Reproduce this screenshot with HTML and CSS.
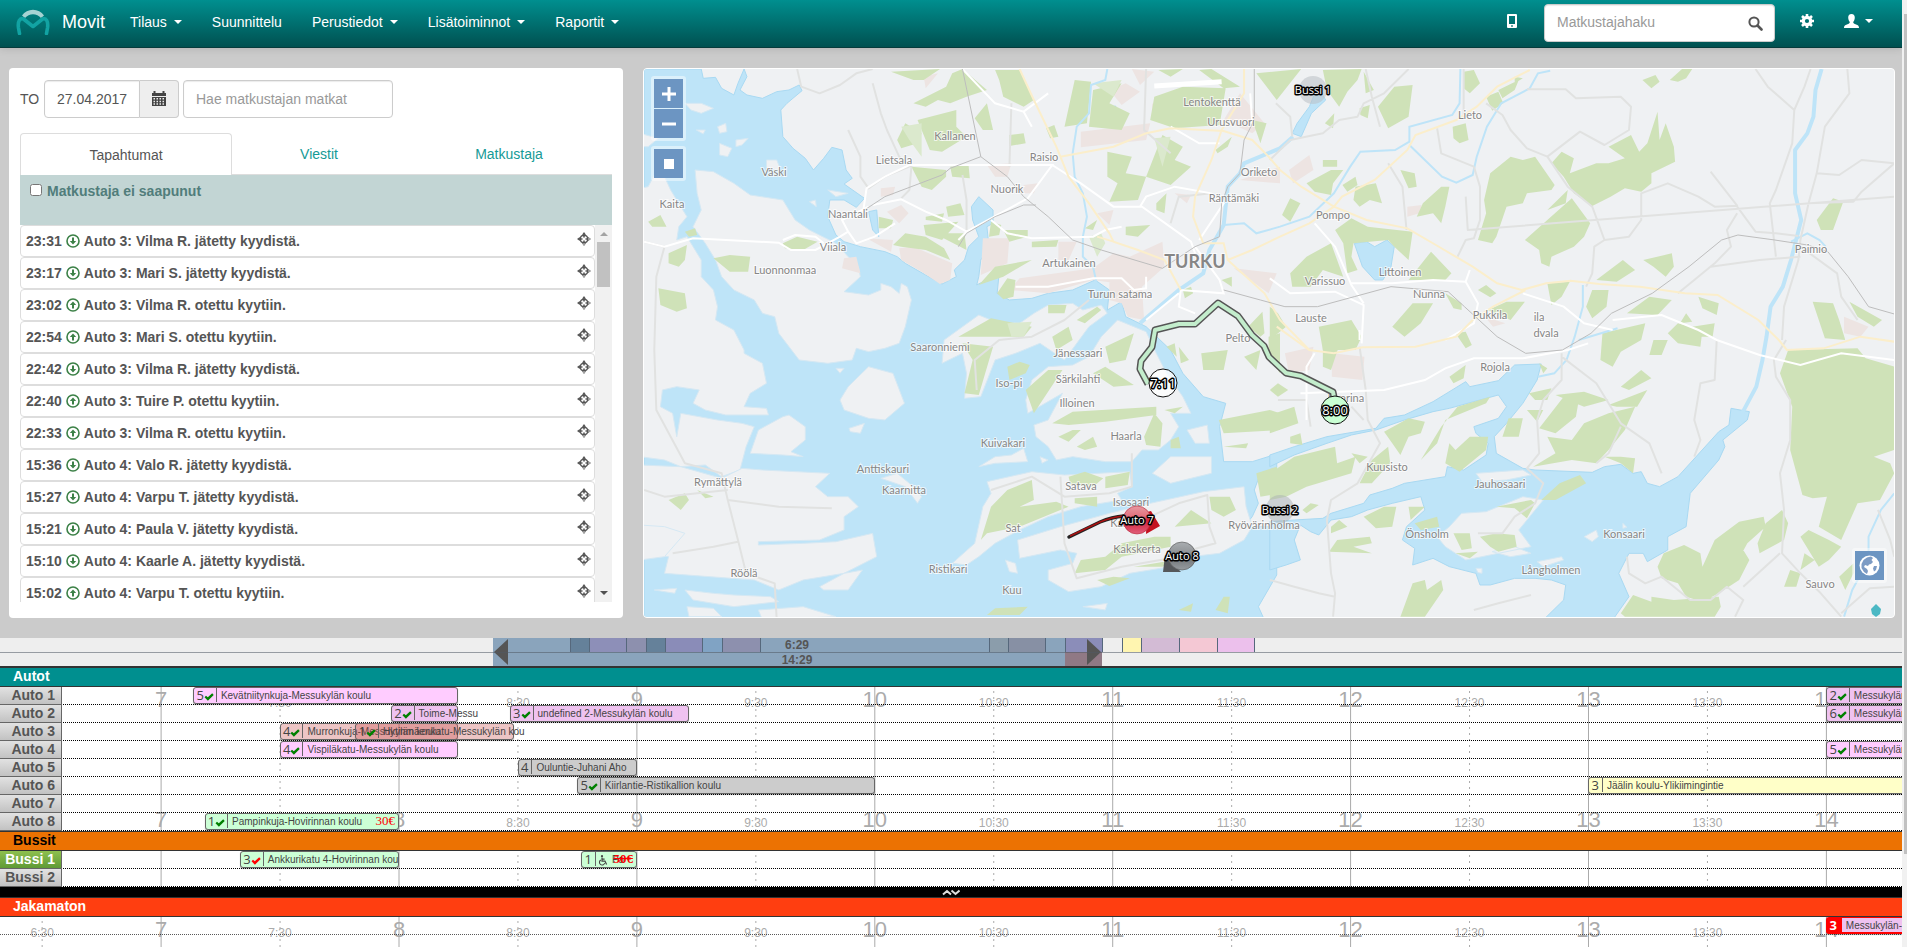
FILE: index.html
```
<!DOCTYPE html>
<html lang="fi">
<head>
<meta charset="utf-8">
<title>Movit</title>
<link rel="stylesheet" href="styles.css">
</head>
<body>
<svg class="defs" width="0" height="0" aria-hidden="true">
  <symbol id="i-target" viewBox="0 0 14 14"><circle cx="7" cy="7" r="3.800" fill="none" stroke="#555" stroke-width="1.500"/><path d="M6.200 1.500h1.600v4H6.200zM6.200 8.500h1.600v4H6.200zM1.500 6.200h4v1.600h-4zM8.500 6.200h4v1.600h-4zM7 0l2 2.800H5zM7 14l2-2.800H5zM0 7l2.800-2v4zM14 7l-2.800-2v4z" fill="#555"/></symbol>
  <symbol id="i-down" viewBox="0 0 14 14"><circle cx="7" cy="7" r="6" fill="none" stroke="#3c8147" stroke-width="1.600"/><path d="M6 3.500h2v3.500h2.200L7 10.600 3.800 7H6z" fill="#3c8147"/></symbol>
  <symbol id="i-up" viewBox="0 0 14 14"><circle cx="7" cy="7" r="6" fill="none" stroke="#3c8147" stroke-width="1.600"/><path d="M6 10.500h2V7h2.200L7 3.400 3.800 7H6z" fill="#3c8147"/></symbol>
  <symbol id="i-check" viewBox="0 0 10 8"><path d="M0.500 4.200L2 2.800l1.800 1.500L8.200.2 9.700 1.900 3.900 7.800z" fill="currentColor"/></symbol>
  <symbol id="i-wheel" viewBox="0 0 10 11"><circle cx="4" cy="1.200" r="1.100" fill="#444"/><path d="M4 2.500v3.700h3l1.600 3.300M4 4.200h2.600" fill="none" stroke="#444" stroke-width="1.200"/><path d="M2.800 5a2.700 2.700 0 1 0 3.900 3.200" fill="none" stroke="#444" stroke-width="1.100"/></symbol>
</svg>
<div class="page">
<div class="app">
  <header class="navbar">
    <a class="brand" href="#">
      <svg class="logo" width="34" height="26" viewBox="0 0 34 26" aria-hidden="true">
        <path d="M6 6.500A13.500 13.500 0 0 1 28 6.500L25 9A10.500 10.500 0 0 0 9 9z" fill="#a6d3d3"/>
        <path d="M3.500 24.500L2.500 19C1.500 12 4 8.500 7.500 10L17 17.500 26.500 10c3.500-1.500 6 2 5 9l-1 5.500" fill="none" stroke="#12a3a3" stroke-width="3.600" stroke-linecap="round" stroke-linejoin="round"/>
      </svg>
      <span>Movit</span>
    </a>
    <nav class="menu">
      <a href="#">Tilaus<i class="caret"></i></a>
      <a href="#">Suunnittelu</a>
      <a href="#">Perustiedot<i class="caret"></i></a>
      <a href="#">Lisätoiminnot<i class="caret"></i></a>
      <a href="#">Raportit<i class="caret"></i></a>
    </nav>
    <div class="tools">
      <a href="#" aria-label="Mobiili"><svg width="12" height="14" viewBox="0 0 12 14"><path fill="#fff" fill-rule="evenodd" d="M2 0h8a1 1 0 0 1 1 1v12a1 1 0 0 1-1 1H2a1 1 0 0 1-1-1V1a1 1 0 0 1 1-1zM3 2v8h6V2zM5.200 11.200v1.600h1.600v-1.600z"/></svg></a>
      <div class="search">
        <input type="text" placeholder="Matkustajahaku" aria-label="Matkustajahaku">
        <svg width="15" height="15" viewBox="0 0 15 15" aria-hidden="true"><circle cx="6" cy="6" r="4.600" fill="none" stroke="#555" stroke-width="2"/><path d="M9.500 9.500l4 4" stroke="#555" stroke-width="2.600" stroke-linecap="round"/></svg>
      </div>
      <a href="#" aria-label="Asetukset"><svg width="14" height="14" viewBox="0 0 14 14"><circle cx="7" cy="7" r="3.700" fill="none" stroke="#fff" stroke-width="3.200"/><path d="M7 0v3M7 11v3M0 7h3M11 7h3M2 2l2.200 2.200M9.800 9.800L12 12M12 2L9.800 4.200M4.200 9.800L2 12" stroke="#fff" stroke-width="2.600"/></svg></a>
      <a href="#" aria-label="Käyttäjä"><svg width="15" height="14" viewBox="0 0 15 14"><path fill="#fff" d="M7.500 0C9.700 0 10.900 1.500 10.800 3.700 10.700 5.700 10 7 9.300 7.800c-.2 1 .2 1.500 1 1.900l3 1.300C14.600 11.600 15 12.500 15 14H0c0-1.500.4-2.400 1.700-3l3-1.300c.8-.4 1.200-.9 1-1.900C5 7 4.300 5.700 4.200 3.700 4.100 1.500 5.300 0 7.500 0z"/></svg><i class="caret"></i></a>
    </div>
  </header>

  <main class="main">
    <section class="panel">
      <form class="filters">
        <label for="date">TO</label>
        <div class="date">
          <input id="date" type="text" value="27.04.2017">
          <button type="button" aria-label="Kalenteri"><svg width="14" height="15" viewBox="0 0 14 15"><path fill="#444" fill-rule="evenodd" d="M0 2h1.500V0h2v2h7V0h2v2H14v3H0zM0 6h14v9H0zM1.500 7v1.500H3V7zm3 0v1.500H6V7zm3 0v1.500H9V7zm3 0v1.500H12V7zM1.500 9.700v1.500H3V9.700zm3 0v1.500H6V9.700zm3 0v1.500H9V9.700zm3 0v1.500H12V9.700zM1.500 12.300v1.500H3v-1.500zm3 0v1.500H6v-1.500zm3 0v1.500H9v-1.500zm3 0v1.500H12v-1.500z"/></svg></button>
        </div>
        <input class="trip" type="text" placeholder="Hae matkustajan matkat" aria-label="Hae matkustajan matkat">
      </form>
      <nav class="tabs">
        <a class="active" href="#">Tapahtumat</a>
        <a href="#">Viestit</a>
        <a href="#">Matkustaja</a>
      </nav>
      <div class="band"><input type="checkbox" id="absent"><label for="absent">Matkustaja ei saapunut</label></div>
      <div class="feed">
        <ul id="feed"></ul>
        <div class="bar"><i class="up"></i><i class="thumb"></i><i class="dn"></i></div>
      </div>
    </section>

    <section class="map">
      <svg class="chart" viewBox="643 69 1252 548" preserveAspectRatio="xMidYMid slice" aria-label="Kartta">
        <defs>
          <linearGradient id="gRed" x1="0" y1="0" x2="0" y2="1"><stop offset="0" stop-color="#e89aa2"/><stop offset=".35" stop-color="#e3737f"/><stop offset=".5" stop-color="#cf1f38"/><stop offset="1" stop-color="#e0607c"/></linearGradient>
          <linearGradient id="gGray" x1="0" y1="0" x2="0" y2="1"><stop offset="0" stop-color="#a9adb0"/><stop offset=".4" stop-color="#8f9396"/><stop offset=".5" stop-color="#6c7073"/><stop offset="1" stop-color="#969b9f"/></linearGradient>
        </defs>
        <rect x="640" y="60" width="1270" height="570" fill="#eff1f3"/>
        <g transform="translate(640 60) scale(.40816 .33333)">
          <g class="water">
            <path d="M10 27L150 27 155 55 185 52 200 85 230 105 240 70 255 27 262 50 245 90 262 105 300 115 335 95 365 90 390 75 397 92 360 130 345 150 350 230 375 265 405 295 425 330 450 295 470 262 495 270 505 330 520 355 500 372 550 415 530 442 500 420 465 420 460 470 480 525 500 545 540 560 600 575 630 590 650 610 700 645 740 672 775 650 770 630 795 600 805 560 830 530 815 480 812 440 830 410 865 450 865 490 850 500 855 560 835 600 830 650 825 675 880 640 875 700 905 720 960 715 1000 700 1060 690 1115 660 1150 690 1145 750 1180 725 1190 770 1215 785 1240 800 1300 870 1330 940 1380 1010 1435 1030 1420 1100 1430 1205 1500 1205 1560 1182 1560 1225 1520 1240 1505 1290 1515 1330 1500 1370 1480 1400 1560 1400 1560 1545 1515 1640 1530 1680 10 1680z"/>
            <path transform="translate(1543 840)" d="M0 380L0 345 60 320 140 290 260 265 280 235 330 225 400 185 480 125 490 140 560 122 600 75 665 72 655 120 620 190 580 250 550 290 555 340 620 385 650 390 790 397 820 380 860 373 890 400 910 395 925 430 955 440 1000 410 1100 275 1125 255 1130 205 1175 215 1170 240 1110 300 1115 320 1100 360 1030 460 1020 560 975 590 975 630 925 665 915 640 880 640 855 700 880 770 840 840 670 840 720 780 725 735 690 720 650 715 600 715 540 735 515 735 505 700 440 680 400 655 350 675 355 625 325 600 335 560 380 510 370 470 300 490 240 510 200 530 150 540 120 585 100 575 75 555 60 600 75 660 40 675 0 690 0 545 60 540 130 535 150 520 230 490 245 465 300 445 330 430 430 410 435 380 475 390 530 345 535 310 505 280 500 260 560 235 580 200 560 165 500 185 440 205 400 215 330 240 260 270 200 285 140 310 60 345z"/>
            <path d="M10 555L40 565 48 620 40 660 20 630zM40 760L60 790 65 810 45 820 38 790zM1120 150L1165 138 1175 180 1150 200 1120 190zM560 455L580 450 585 530 570 510zM1750 550L1780 545 1800 560 1830 540 1848 560 1840 620 1820 660 1800 660 1770 620zM1610 190L1640 140 1660 80 1680 120 1645 160 1620 230 1598 220zM2915 940L2945 935 2955 970 2920 980z"/>
          </g>
          <g class="land">
            <path d="M135 330L180 335 230 370 270 405 350 420 360 440 380 480 415 510 480 550 510 590 535 620 540 650 500 695 560 705 590 690 590 670 615 680 635 700 640 670 655 680 665 720 650 800 635 850 600 865 560 875 530 865 520 900 460 910 390 900 340 820 330 770 300 760 280 720 230 690 200 650 185 600 160 550 130 500 150 450 140 400z"/>
            <path d="M0 385L20 380 35 345 60 350 75 390 100 440 115 470 95 500 90 540 115 530 130 560 150 600 150 650 180 690 190 740 185 780 230 810 255 870 255 880 300 910 310 970 270 1000 255 1040 310 1045 315 1065 210 1065 160 1050 130 1030 145 990 90 980 55 990 50 1040 80 1060 90 1130 100 1060 190 1080 250 1090 280 1100 260 1160 245 1230 200 1250 160 1215 100 1220 60 1200 0 1190z"/>
            <path d="M270 1180L290 1110 350 1070 365 1065 405 1100 405 1140 370 1175 400 1190 350 1185zM0 1215L100 1220 200 1255 250 1225 300 1230 465 1240 430 1280 460 1310 510 1310 535 1340 500 1370 500 1410 440 1440 290 1445 290 1455 400 1450 480 1445 570 1420 580 1490 500 1540 400 1560 340 1590 280 1560 60 1540 70 1490 0 1480z"/>
            <path d="M0 1395L60 1400 110 1420 60 1490 0 1500z"/>
            <path d="M745 840L830 765 870 785 930 790 965 760 1000 735 1060 730 1085 750 1130 735 1145 760 1100 800 1070 850 1040 900 980 850 920 880 870 900 835 1010 795 1015 800 940 790 880 740 910z"/>
            <path d="M965 1095L1000 1080 1035 1000 950 1060 945 1020 960 960 1000 920 1060 915 1100 890 1130 830 1170 780 1240 815 1265 880 1290 940 1330 1010 1350 1060 1300 1060 1320 1100 1300 1140 1270 1170 1230 1170 1205 1205 1140 1205 1060 1190 1020 1200 1000 1160 970 1130z"/>
            <path d="M850 1265L960 1235 1040 1245 1200 1235 1205 1280 1170 1300 1180 1320 1080 1340 1000 1370 930 1410 870 1450 830 1490 800 1515 765 1510 820 1450 840 1340 860 1300z"/>
            <path d="M925 1440L1030 1400 1150 1360 1250 1330 1380 1295 1480 1280 1485 1340 1500 1400 1480 1440 1420 1480 1350 1490 1300 1520 1200 1540 1130 1580 1050 1595 1000 1560 1000 1530 1060 1510 1070 1480 1030 1470 930 1495z"/>
            <path d="M490 1020L510 980 560 920 620 940 648 1030 600 1080 560 1075 500 1050zM512 1105L550 1090 540 1120 515 1115zM830 1220L870 1190 910 1185 940 1165 950 1205 870 1210zM1255 1240L1300 1190 1400 1190 1400 1240 1300 1270zM1340 1110L1390 1095 1395 1150 1360 1150zM440 1580L500 1540 545 1530 510 1590 450 1590zM110 1590L180 1600 230 1605 320 1610 340 1625 230 1640 130 1620zM35 1590L90 1585 85 1600zM590 1255L630 1240 660 1270 690 1310 680 1330 650 1280zM895 1500L920 1510 925 1540 905 1535zM110 130L150 130 180 145 150 160 125 150zM190 200L210 190 213 215 195 220zM195 250L225 265 215 290 195 285zM235 240L265 235 250 255 235 260zM138 210L160 210 155 222zM310 300L335 300 345 330 310 330zM415 425L430 420 432 440zM460 390L510 400 480 410zM0 220L45 235 20 260 0 260zM1085 1640L1145 1630 1140 1650zM480 925L500 925 490 940zM980 1190L1000 1200 985 1210zM115 1640L180 1645 200 1670 120 1670zM290 1650L400 1640 480 1670 300 1680z"/>
            <g transform="translate(1543 840)"><path d="M505 400L560 395 620 390 640 405 580 420 520 425zM770 590L800 570 805 590 790 605zM655 665L715 650 720 660 670 680zM865 550L875 562 865 565zM505 685L520 685 520 700 510 698zM440 560L470 520 530 515 620 470 670 480 610 570 640 620 560 640 480 660 430 620 410 590zM545 635L600 620 640 640 590 650z"/></g>
          </g>
          <g class="pink">
            <path d="M555 535L620 540 615 575zM635 565L670 560 765 610 760 660 735 672 690 635 640 600zM605 455L640 435 658 460 635 490zM500 595L530 590 540 640 495 625zM1150 660L1230 680 1235 780 1195 770 1180 730 1150 720zM905 690L930 655 1110 625 1160 580 1200 590 1280 545 1285 620 1230 680 1110 660 1000 700zM1025 545L1070 545 1050 600 1025 600zM850 315L910 310 900 350 870 350zM840 535L905 535 900 610 835 645zM1150 90L1190 70 1225 95 1180 135zM1205 27L1260 35 1225 75zM1470 100L1530 190 1500 220 1430 180zM1080 215L1250 190 1240 240 1080 262zM1255 130L1285 160 1255 165zM1470 360L1568 320 1568 370zM1455 625L1560 640 1540 700zM590 385L625 380 620 405 590 410zM1120 460L1160 450 1150 495zM1310 400L1350 405 1340 430zM940 375L975 370 965 400 940 400zM695 50L730 40 700 85zM1590 330L1640 285 1650 330 1600 370zM1880 440L1915 435 1910 460 1880 470zM1580 880L1650 860 1640 930 1590 940zM1695 880L1775 890 1770 960 1695 950zM2950 770L3010 800 2990 830 2950 820zM2070 770L2120 790 2090 800z"/>
          </g>
          <g class="green">
            <path d="M615 35L735 27 695 60 670 60zM670 130L750 80 765 40 790 27 850 90 800 110 760 130 730 120 700 140zM680 180L775 150 775 200 800 230 740 275 710 270zM630 240L650 190 690 220 680 250 640 265zM820 175L850 130 865 210 840 210zM870 30L930 30 965 120 940 140 890 110 880 60zM1065 60L1105 65 1095 190 1040 200zM995 205L1015 195 1025 230 1005 235zM905 225L940 220 945 250 905 258zM665 320L750 330 750 350 715 390 690 380zM760 320L805 315 808 355 765 350zM585 470L620 480 615 505 585 505zM750 440L785 430 795 465 755 470zM700 470L745 460 740 485 700 480zM695 495L780 485 740 540 700 525zM620 555L650 520 700 530 745 565 760 600 700 570 640 560zM720 520L795 520 800 570zM860 485L885 495 880 525 855 530zM890 510L950 510 950 530 905 545zM960 545L1025 540 1020 560 960 562zM830 675L870 620 960 600 890 650zM875 700L900 655 920 660 915 710 890 718zM1145 275L1205 290 1190 340 1240 350 1220 420 1150 425 1170 370 1145 350zM1190 500L1250 495 1220 530 1190 525zM1240 350L1280 225 1330 260 1310 300 1350 320 1300 375zM1260 110L1330 80 1435 85 1420 195 1310 205 1250 180zM1270 30L1330 27 1300 50zM1370 30L1400 27 1470 80 1430 85zM1510 40L1620 27 1560 120zM1500 180L1535 190 1520 250zM1410 270L1450 230 1440 260 1415 280zM1110 90L1180 70 1150 130 1200 160 1180 210 1100 200zM1265 430L1290 400 1285 460 1265 450zM1090 505L1120 480 1110 510zM1070 780L1120 740 1130 750 1090 790zM1330 690L1350 680 1355 700 1335 715zM1425 660L1450 650 1450 680zM20 485L50 465 65 500 30 500zM45 685L110 700 115 745 90 755 50 735zM70 580L115 555 110 600 95 620 70 610zM110 515L135 505 140 525 120 530zM350 550L385 530 435 545 400 570 355 565zM180 595L220 585 270 590 265 635 220 635zM1490 800L1525 755 1530 820 1520 830zM780 830L860 775 960 800 940 830 860 830zM1000 735L1045 735 1040 760 1000 760zM1010 830L1050 800 1060 840 1020 870zM1140 860L1210 820 1190 900 1150 910zM790 850L865 860 830 1005 795 1000 815 900zM900 920L930 905 955 915 945 940 905 960zM945 990L1000 930 1035 930 965 1060zM1110 940L1140 920 1210 975 1160 980zM1010 1090L1060 1055 1265 1040 1265 1065 1140 1085 1050 1095zM1235 1130L1260 1060 1280 1090 1275 1160 1240 1155zM1025 1130L1060 1110 1080 1110 1050 1145zM1300 1140L1320 1130 1325 1165 1300 1165zM1070 1160L1110 1130 1120 1160 1090 1170zM1285 1050L1330 1040 1310 1060zM1050 1250L1090 1235 1135 1255 1110 1280 1055 1275zM1140 1250L1200 1235 1195 1275 1140 1285zM860 1340L900 1290 960 1260 965 1320 930 1340 1020 1325 1050 1340 930 1400 850 1420 835 1440zM1065 1315L1120 1310 1120 1340 1065 1330zM1310 1400L1350 1350 1400 1390zM1395 1310L1445 1310 1460 1350 1430 1370 1400 1350zM1065 1540L1080 1500 1140 1490 1180 1450 1260 1430 1300 1430 1300 1460 1180 1490 1140 1530zM1210 1520L1310 1500 1280 1520zM1120 1560L1160 1550 1200 1555 1150 1578zM1418 1080L1543 1050 1568 1060 1568 1110 1430 1120zM1430 1160L1490 1150 1485 1165zM1510 1240L1560 1220 1568 1300 1520 1310zM1430 1610L1445 1610 1440 1660 1410 1650zM870 1645L950 1640 930 1665 850 1665zM1320 1650L1355 1630 1350 1655zM70 1320L110 1300 120 1320 100 1350zM140 1290L180 1310 160 1315zM1320 860L1345 900 1325 910zM1375 880L1440 870 1430 930 1380 930zM1290 860L1310 850 1315 890zM1480 890L1520 870 1510 930zM1540 830L1568 820 1568 940 1540 890z"/>
            <g transform="translate(1543 0)"><path d="M130 30L225 27 215 60 190 95 170 140 140 90zM230 35L255 90 235 100zM265 140L305 80 350 75 340 170 290 205zM220 145L245 135 240 175 222 165zM135 190L158 160 155 205zM475 35L500 30 515 70 490 100 475 85zM530 110L560 95 572 130 545 152zM560 90L610 60 600 90 570 115zM600 50L620 55 600 70zM913 60L945 45 955 65 935 85zM980 60L1010 27 1035 27 1020 55 1000 65zM448 200L480 190 487 240 465 250 450 235zM540 340L590 290 620 300 650 290 698 375 690 390 630 400 620 430 580 440 555 530 545 550 510 540 530 460 525 420zM690 310L715 275 745 295 735 340 800 310 830 310 870 295 830 260 885 225 905 275 925 250 950 155 955 240 970 190 990 260 993 305 935 340 935 370 910 395 870 385 835 410 790 438 745 400 720 350zM625 540L680 480 740 415 785 490 770 530 745 560 690 590 685 620 665 610 660 570zM680 450L730 390 725 430zM90 370L150 330 180 330 155 370 150 405 110 395zM130 300L165 300 165 320 130 320zM178 375L210 350 215 375 190 395zM205 420L210 380 260 370 275 430 245 420 220 440zM320 330L355 340 360 380 340 385zM375 430L420 380 440 380 430 440 420 490 400 460 360 470zM30 465L50 415 75 430 50 485zM160 510L200 475 240 500 350 515 340 600 305 560 290 540 205 550 200 590 215 630 190 640 180 550zM340 660L395 575 430 620 445 640 430 660zM50 640L90 590 150 550 180 650 130 630 100 680 55 680zM510 690L530 675 555 700 540 712zM535 750L580 725 625 725 590 780zM300 800L350 730 400 730 370 790 330 830zM130 870L120 800 200 780 225 830 210 870zM430 700L470 730 470 750 450 745zM800 660L865 600 895 630 850 665zM680 670L735 665 715 710 690 735zM775 740L790 690 830 690 825 740 790 775zM875 760L930 710 985 720 950 765zM915 600L985 580 990 620 970 650 940 620zM1005 790L1020 760 1035 785zM1340 480L1380 415 1405 425 1380 510 1350 510zM1330 725L1380 730 1395 780 1410 840 1360 835zM1420 725L1500 780 1480 800 1440 770zM1050 710L1100 730 1095 765 1060 745zM1035 800L1090 790 1085 830 1040 830zM455 820L480 815 495 855 480 865zM20 760L0 740 0 840 40 800z"/></g>
            <g transform="translate(1543 840)"><path d="M815 -20L920 -50 910 0 860 35 840 80 810 60zM975 -20L1000 -50 1060 -30 1055 20 1000 10zM940 0L975 0 960 45 930 45zM1270 30L1440 25 1460 55 1530 80 1530 330 1480 350 1520 370 1530 400 1495 480 1440 490 1400 600 1345 560 1365 470 1330 475 1305 465 1275 330 1280 200 1250 100zM645 380L700 340 680 290 740 300 770 250 830 220 895 200 870 270 830 330 800 370 740 360zM660 265L720 170 760 160 750 230 700 280zM700 165L770 155 830 180 770 200zM830 195L925 150 900 200 850 200zM860 140L910 90 935 115 880 150zM370 360L420 260 460 200 540 170 530 190 430 240 410 310zM455 330L490 290 535 290 530 330 465 395 430 370 440 310zM280 275L340 235 380 245 370 280 340 290 320 345 300 310zM0 400L60 350 160 320 165 370 210 350 200 400 90 440 40 470 0 480zM200 340L240 350 220 370zM250 360L290 320 295 370 250 430 220 430zM0 225L60 200 70 250 0 280zM50 290L75 280 80 315 50 310zM440 110L480 75 475 115 450 130zM570 290L585 235 620 235 610 290zM635 160L690 145 680 180 650 180zM630 210L670 210 655 245zM820 350L860 350 895 355 890 400 860 370zM665 480L710 430 760 405 775 430 700 480zM555 500L640 480 650 490 630 535 600 505zM230 530L280 500 310 500 300 560 260 565zM340 500L380 500 345 540zM320 830L350 730 380 720 385 750 420 720 425 750 380 830zM145 635L165 600 245 590 250 610 205 620 250 640zM450 580L490 580 495 625 470 630zM515 590L555 580 600 585 605 620 560 635 540 620zM455 640L510 635 490 655zM355 550L410 530 415 560 370 570zM950 680L965 640 1015 615 1055 640 1060 680 1100 610 1145 600 1175 660 1150 720 1100 760 1060 785 1020 770 1000 730 960 715zM1060 680L1090 600 1150 545 1210 530 1215 560 1170 610 1130 700zM1195 610L1215 550 1255 510 1270 550 1260 600 1200 640zM1300 590L1320 570 1370 600 1400 620 1370 660 1345 680zM1260 740L1275 690 1300 700 1290 740zM1300 690L1310 640 1335 660zM1395 710L1430 670 1430 700 1410 750zM860 820L890 765 935 785 935 770 990 780 1100 770 1105 800 1090 830 870 830zM150 560L170 540 190 560 150 580zM80 510L100 490 120 495 90 520zM0 150L20 130 45 150 20 170zM130 0L180 -20 150 90 130 80zM670 100L660 70 680 85z"/></g>
          </g>
          <g class="green pale">
            <path d="M640 200L690 190 690 290 660 240zM1260 235L1300 230 1280 320zM1110 70L1180 60 1160 110zM1100 530L1130 520 1140 550 1120 590zM900 790L960 785 940 830 910 830z"/>
          </g>
          <g class="river">
            <path d="M1145 27L1140 60 1105 75 1100 160 1070 200 1060 280 1065 350 1085 400 1095 470 1085 530 1085 590 1110 620 1118 665"/>
            <path class="wide" d="M1225 790L1320 690 1380 640 1395 570 1430 495 1440 380 1470 340 1480 310 1568 265 1600 230"/>
            <path d="M1430 495L1480 490 1510 520 1568 500 1640 470 1700 400 1740 320 1765 275 1850 270 1885 245 1885 200 1990 165 2008 130 2010 27M1885 255L1965 350 2000 368 2040 345 2050 290 2075 200 2110 130 2180 85 2200 40 2230 32"/>
            <path class="wide" d="M2895 27L2880 90 2875 170 2860 220 2830 270 2830 400 2845 480 2820 600 2800 680 2770 740 2760 830 2750 900 2735 980 2700 1060"/>
            <path d="M2820 545L2860 520 2890 540 2905 560M2310 675L2310 740 2290 830 2270 900 2240 940 2200 950M2395 805L2300 840M3073 1300L3040 1350 3010 1430 3010 1500 2970 1590 2950 1670"/>
          </g>
          <g class="casing">
            <path d="M385 27L395 80 440 100 490 75 530 40 570 27M510 210L540 290 540 350 560 385 600 350 660 320M570 70L590 160 605 210 635 290 665 320 660 390 640 415M790 345L800 420 800 510M10 545L60 560 40 650 35 870 40 1050 110 1210 200 1240 215 1320 240 1440 260 1540 330 1570 335 1680M10 1290L60 1310 215 1290 M215 1320L340 1340 470 1345M80 1480L180 1460 240 1445M1240 27L1235 210 1300 280 M910 130L905 320M1300 490L1320 410 1400 400M1030 1250L1040 1450 1070 1555 1180 1520 1320 1490M1250 1370L1320 1330 1390 1305 1395 1400 1410 1450 1320 1480M1205 1180L1205 1280 1150 1300 1040 1310 960 1250 860 1290M1100 720L1040 780 960 830 880 840 820 900 825 990"/>
            <path transform="translate(1543 0)" d="M15 130L50 170 55 230M0 300L50 240 130 220 170 180 215 170 230 130 280 100 340 27M270 200L250 110 235 27M475 27L475 180M530 130L570 165 590 210 630 265 680 290 760 215 820 255 880 210 885 140 860 110 750 115 725 88 630 88M680 290L730 380 790 440 820 540 880 530 910 480 910 400 975 370 1050 410 1090 440 1145 437 1080 335M820 540L795 560 790 640 775 680M500 320L515 380 515 480 500 535 480 540 460 590M410 205L420 280 500 320M290 310L325 380 335 510M1190 27L1220 80 1285 150 1280 250 1240 390 1225 430 1240 590M1285 150L1310 80 1325 27M1415 27L1420 100 1360 200 1340 340 1320 430 1300 540 1295 600 1260 740 1255 840M1340 340L1395 345 1450 300 1530 310M1320 430L1430 425 1450 395 1530 310M1145 440L1190 515 1240 520 1295 528M1145 460L1120 510 1130 560 1090 610 1040 660 1000 700M1080 620L1200 600 1300 590M1300 560L1390 640 1400 710 1440 780M480 410L485 510 1530 410"/>
            <path transform="translate(1543 840)" d="M140 540L150 480 215 430 270 310 240 240 235 150 220 20M140 540L150 700 160 760 155 830M715 40L715 120 670 180 655 240 660 340 630 385 670 430 650 490 600 530 570 580 510 580M715 50L800 130 860 250 930 310 960 400M860 260L830 340 800 370M1095 0L1090 120 1055 130 1040 240 1055 300 1040 350M1265 0L1235 60 1240 110 1275 180 1275 300 1250 400 1260 510 1255 640 1300 700 1350 760 1400 830M875 650L880 700 920 730 960 710 1030 780 1080 780 1120 740 1160 780 1140 830M1160 740L1250 640M500 810L560 790 640 765M0 720L60 740 120 760 160 770M1530 740L1470 745 1400 820M1490 510L1520 600 1530 650M20 180L90 180 100 260M230 240L200 200"/>
          </g>
          <g class="road">
            <path d="M10 545L60 560 130 535 340 548 370 570 430 570 490 530 510 515 495 480 560 440 M350 540L380 525 430 530 450 550M510 515L530 550 575 530 625 490M570 435L640 418 700 455 750 480 800 515 860 475 950 415 1010 315 830 315 660 315 600 350 555 385 545 470M800 515L780 540M860 480L900 520 960 535 1110 530 1140 510 1180 500M1010 315L1080 370 1160 440 1230 440 1350 545 1360 580M1225 440L1240 410 1310 380 1400 400 1430 430 1370 540M790 27L870 130 940 155 1000 100M940 155L960 200M920 680L1000 680 1110 655 1180 655 1210 690 1240 685 1240 650M1360 560L1420 660 1430 700 1325 690 1320 740 1360 760M1300 200L1370 250 1420 250M1495 100L1500 190M1320 700L1240 780"/>
            <path class="runway" d="M1260 78L1425 65"/>
            <path transform="translate(1543 840)" d="M75 160L280 150 380 120 430 85 500 55 620 55 730 30 780 10M0 -185L50 -140 160 -145 230 -105 225 10M200 -170L300 -170 400 -180 480 -175 510 -110 500 -50 430 0M110 -350L160 -280 200 -165 230 -110M480 -175L490 -210M220 0L220 -30M90 240L90 80 110 40M620 -140L720 -100 770 -50 840 -30M840 -60L960 -75 1050 -30 1095 0 1200 45 1300 75 1400 40 1530 60"/>
          </g>
          <g class="main-road">
            <path d="M930 27L965 120 1020 260 1050 350 1100 430 1150 520 1160 545 1220 570 1285 600M1160 545L1120 530M1030 290L1160 260 1240 220 1300 205 1430 213 1500 240 1540 290 1568 330 1620 380 1700 440 1780 480 1880 505 1950 555 2040 620 2100 670 2160 690 2220 670 2280 662 2350 672 2450 680 2560 700 2640 705 2740 780 2790 840M1480 27L1480 100 1425 210 1400 300 1360 410 1355 470 1380 550 1430 550 1440 600 1530 700 1568 780 1640 870M1440 600L1500 570 1568 530 1640 490 1700 440 1720 410 1800 360 1880 270 1900 225 2000 180 2050 140 2100 80 2180 30M2170 690L2090 740 2040 780 2000 830 1900 860 1770 862 1700 880 1640 870 1560 800M2790 840L2810 870 2900 865 2990 830 3073 845M1285 600L1325 690"/>
          </g>
          <g class="rail">
            <path d="M790 27L835 290 760 325 740 345 600 410 550 450M835 290L900 350 940 410 1000 470 1060 540 1130 570 1280 625 1360 560 1420 530 1425 430 1440 380 1470 340 1480 240 1505 180 1505 27M780 560L800 520 870 470 940 435 970 435M1430 690L1520 720 1580 740 1660 740 1750 710 1840 680 1980 695 2020 740 2100 830 2170 880 2260 870 2330 820 2380 760 2480 700 2570 620 2650 540 2690 525 2780 540 2860 555 2910 575 2960 650 3010 740 3073 762"/>
          </g>
        </g>
        <g class="places">
          <text x="1212" y="106">Lentokenttä</text><text x="1231" y="126">Urusvuori</text><text x="955" y="140">Kallanen</text><text x="894" y="164">Lietsala</text><text x="1044" y="161">Raisio</text><text x="774" y="176">Väski</text><text x="1007" y="193">Nuorik</text><text x="672" y="208">Kaita</text><text x="848" y="218">Naantali</text><text x="833" y="251">Viiala</text><text x="785" y="274">Luonnonmaa</text><text x="1069" y="267">Artukainen</text><text x="1120" y="298">Turun satama</text><text x="1259" y="176">Oriketo</text><text x="1234" y="202">Räntämäki</text><text x="1238" y="342">Pelto</text><text x="940" y="351">Saaronniemi</text>
          <text x="1470" y="119">Lieto</text><text x="1333" y="219">Pompo</text><text x="1400" y="276">Littoinen</text><text x="1325" y="285">Varissuo</text><text x="1429" y="298">Nunna</text><text x="1311" y="322">Lauste</text><text x="1490" y="319">Pukkila</text><text x="1539" y="321">ila</text><text x="1546" y="337">dvala</text><text x="1811" y="253">Paimio</text>
          <text x="1078" y="357">Jänessaari</text><text x="1009" y="387">Iso-pi</text><text x="1078" y="383">Särkilahti</text><text x="1077" y="407">Illoinen</text><text x="1126" y="440">Haarla</text><text x="1003" y="447">Kuivakari</text><text x="883" y="473">Anttiskauri</text><text x="718" y="486">Rymättylä</text><text x="904" y="494">Kaarnitta</text><text x="1081" y="490">Satava</text><text x="1131" y="506">Isosaari</text><text x="1013" y="532">Sat</text><text x="1118" y="527">Kai</text><text x="1137" y="553">Kakskerta</text><text x="948" y="573">Ristikari</text><text x="744" y="577">Röölä</text><text x="1012" y="594">Kuu</text><text x="1264" y="529">Ryövärinholma</text>
          <text x="1495" y="371">Rojola</text><text x="1346" y="402">Kaarina</text><text x="1387" y="471">Kuusisto</text><text x="1500" y="488">Jauhosaari</text><text x="1427" y="538">Önsholm</text><text x="1624" y="538">Konsaari</text><text x="1551" y="574">Långholmen</text><text x="1820" y="588">Sauvo</text>
          <text class="city" x="1195" y="268">TURKU</text>
        </g>
        <g fill="none" stroke-linejoin="round">
          <path d="M1069 537L1100 522Q1112 517 1124 516" stroke="#222" stroke-width="3.500" stroke-linecap="round"/><path d="M1070 536L1100 522Q1112 517 1124 516" stroke="#a11" stroke-width="1.500"/>
          <path d="M1148 384L1140 369 1141 361 1152 347 1155 330 1179 324 1195 324 1218 303 1238 316 1252 335 1264 346 1269 357 1286 373 1301 376 1333 392 1335 402" stroke="#555" stroke-width="7"/>
          <path d="M1148 384L1140 369 1141 361 1152 347 1155 330 1179 324 1195 324 1218 303 1238 316 1252 335 1264 346 1269 357 1286 373 1301 376 1333 392 1335 402" stroke="#c3edcc" stroke-width="4"/>
        </g>
        <g class="pins">
          <path d="M1147 512l4 -1 9 15 -14 8z" fill="#c4121f"/><path d="M1165 555l-2 17 18 0z" fill="#55585b"/>
          <circle cx="1313" cy="90" r="14" fill="#b9bfc4" fill-opacity=".55"/><circle cx="1280" cy="509" r="14" fill="#a9afb4" fill-opacity=".5"/>
          <circle cx="1137" cy="520" r="14" fill="url(#gRed)" stroke="#b8283a" stroke-opacity=".6"/><circle cx="1182" cy="556" r="14" fill="url(#gGray)" stroke="#555" stroke-opacity=".6"/>
          <circle cx="1163" cy="383" r="14" fill="#fff" fill-opacity=".75" stroke="#111"/><circle cx="1335" cy="410" r="14" fill="#c9ffd3" stroke="#111"/>
          <text x="1313" y="94">Bussi 1</text><text x="1280" y="514">Bussi 2</text><text x="1137" y="524">Auto 7</text><text x="1182" y="560">Auto 8</text>
          <text class="big" x="1163" y="388">7:11</text><text class="big" x="1335" y="415">8:00</text>
        </g>
        <path d="M1876 604l5 5-1 5-4 3-4-3-1-5z" fill="#4bb8c4"/>
      </svg>
      <div class="ctl zoom"><button type="button" aria-label="Lähennä"><svg width="14" height="14"><path d="M7 0v14M0 7h14" stroke="#fff" stroke-width="3"/></svg></button><button type="button" aria-label="Loitonna"><svg width="14" height="14"><path d="M0 7h14" stroke="#fff" stroke-width="3"/></svg></button></div>
      <div class="ctl home"><button type="button" aria-label="Kohdista"><svg width="14" height="14"><path d="M2 2h10v10H2z" fill="#fff"/></svg></button></div>
      <div class="ctl globe"><button type="button" aria-label="Karttatasot"><svg width="21" height="21" viewBox="0 0 21 21"><circle cx="10.500" cy="10.500" r="10" fill="#fff"/><path d="M8 2.500l4-1 2 1.500-1.500 2L14 7l-2 2-2 .5L9 11l-3-1-1 2 3 2 1 2-1 3-3-2-2.500-4 0-4 2-4zM15 11l3 0-1 4-2 1.500-1-3z" fill="#7c9bc4"/></svg></button></div>
    </section>
  </main>

  <section class="overview" id="overview"></section>

  <section class="timeline">
    <h2 class="head teal">Autot</h2>
    <div class="group" data-labels="20 140" data-group="autot"></div>
    <h2 class="head orange">Bussit</h2>
    <div class="group" data-labels="" data-group="bussit"></div>
    <button class="splitter" type="button" aria-label="Muuta korkeutta"><svg width="18" height="7" viewBox="0 0 18 7"><path d="M1 5.500L5 2l4 3.500M9.500 1.500L13.500 5l4-3.500" fill="none" stroke="#ddd" stroke-width="2"/></svg></button>
    <h2 class="head red">Jakamaton</h2>
    <div class="group loose" data-labels="20" data-group="jakamaton"></div>
  </section>
</div>
<div class="pagebar"><i></i></div>
</div>
<script src="app.js"></script>
</body>
</html>
```

FILE: styles.css
```
* { box-sizing: border-box; }
body { margin: 0; background: #cbcbcb; color: #555; font: 14px/20px "Liberation Sans", Arial, sans-serif; }
a { color: inherit; text-decoration: none; }
button, input { font: inherit; color: inherit; margin: 0; }
.defs { position: absolute; }
.page { display: flex; min-height: 100vh; }
.app { flex: 1; min-width: 0; display: flex; flex-direction: column; overflow: hidden; }
.pagebar { width: 5px; background: #f1f1f1; padding: 14px 0 0 2px; }
.pagebar i { display: block; height: 90%; background: #c1c1c1; }

.navbar { height: 48px; display: flex; align-items: center; padding: 0 24px 10px 11px; color: #fff; background: linear-gradient(#008f8f, #005050); border-bottom: 1px solid #063b3b; box-shadow: 0 1px 8px rgba(0,0,0,.12); position: relative; }
.brand { display: flex; align-items: center; gap: 12px; padding: 6px 10px 0 5px; font-size: 18px; height: 44px; }
.menu { display: flex; padding: 6px 0 0; }
.menu a { padding: 0 15px; display: flex; align-items: center; }
.caret { display: inline-block; border: 4px solid transparent; border-top-color: currentColor; border-bottom: 0; margin-left: 7px; }
.tools { margin-left: auto; display: flex; align-items: center; padding-top: 8px; }
.tools > a { display: flex; align-items: center; padding: 0 5px 3px; }
.tools .caret { margin-left: 6px; }
.tools .search { margin: 0 20px 0 21px; }
.tools > a + a { margin-left: 20px; }
.search { position: relative; width: 231px; }
.search input { width: 100%; height: 38px; border: 1px solid #ccc; border-radius: 4px; padding: 0 36px 2px 12px; background: #fff; box-shadow: inset 0 1px 1px rgba(0,0,0,.08); }
.search svg { position: absolute; right: 12px; top: 12px; }
input::placeholder { color: #999; opacity: 1; }

.main { display: grid; grid-template-columns: 614fr 1252fr; gap: 20px; padding: 20px 7px 20px 9px; }
.panel, .map { height: 550px; min-width: 0; border-radius: 4px; background: #fff; }
.panel { padding: 11px; display: flex; flex-direction: column; }
.map { position: relative; border: 1px solid #fff; overflow: hidden; }
.filters { display: flex; align-items: center; gap: 4px; height: 39px; margin-bottom: 15px; }
.filters > label { width: 20px; white-space: nowrap; }
.date { display: flex; width: 135px; height: 38px; }
.filters input { height: 38px; border: 1px solid #ccc; padding: 0 12px; min-width: 0; background: #fff; border-radius: 4px; box-shadow: inset 0 1px 1px rgba(0,0,0,.08); }
.date input { flex: 1; border-radius: 4px 0 0 4px; padding-right: 8px; }
.date button { width: 39px; border: 1px solid #ccc; border-left: 0; border-radius: 0 4px 4px 0; background: #eee; padding: 4px 0 0; }
.filters .trip { width: 210px; }
.tabs { display: grid; grid-template-columns: 212fr 174fr 206fr; height: 42px; color: #159a96; }
.tabs a { display: flex; align-items: center; justify-content: center; border-bottom: 1px solid #ddd; }
.tabs .active { color: #555; border: 1px solid #ddd; border-bottom: 0; border-radius: 4px 4px 0 0; }
.band { height: 50px; background: #c2d5d4; color: #517d7b; font-weight: bold; display: flex; align-items: flex-start; gap: 5px; padding: 6px 10px; }
.band input { width: 12px; height: 12px; margin-top: 3px; }
.feed { display: flex; height: 377px; overflow: hidden; }
.feed ul { flex: 1; min-width: 0; margin: 0; padding: 0; list-style: none; }
.feed li { height: 32px; border: 1px solid #ddd; border-radius: 4px; padding: 0 3px 0 5px; display: flex; align-items: center; gap: 4px; font-weight: bold; }
.feed li .target { margin: 0 0 4px auto; }
.feed li svg { flex: none; }
.feed li button { border: 0; background: none; padding: 0; display: flex; }
.bar { width: 17px; background: #f1f1f1; display: flex; flex-direction: column; align-items: center; padding: 7px 0; }
.bar i { display: block; }
.bar .up { border: 4px solid transparent; border-top: 0; border-bottom-color: #a3a3a3; }
.bar .thumb { width: 13px; height: 45px; background: #c1c1c1; margin-top: 6px; }
.bar .dn { border: 4px solid transparent; border-bottom: 0; border-top-color: #505050; margin-top: auto; }

.chart { display: block; width: 100%; height: 100%; }
.chart path { vector-effect: non-scaling-stroke; }
.water path { fill: #bee4f8; stroke: #a9d9f2; }
.land path { fill: #eff1f3; stroke: #d5e8f3; }
.pink path { fill: #ede4e2; }
.green path { fill: #cfe2b8; }
.pale path { fill: #dbe9cd; }
.river path { fill: none; stroke: #bee4f8; stroke-width: 2; }
.river .wide { stroke-width: 4; }
.casing path { fill: none; stroke: #e1e2e1; stroke-width: 2; stroke-linejoin: round; }
.road path { fill: none; stroke: #fff; stroke-width: 2; }
.road .runway { stroke-width: 5; }
.main-road path { fill: none; stroke: #fbeecb; stroke-width: 2; }
.rail path { fill: none; stroke: #bdbdbd; stroke-width: 1; }
.places text { font: 11px Lato, "Open Sans", sans-serif; fill: #868686; text-anchor: middle; paint-order: stroke; stroke: rgba(255,255,255,.7); stroke-width: 2px; }
.places .city { font-size: 18px; font-weight: bold; }
.pins text { font: 11px "Open Sans", sans-serif; fill: #fff; stroke: #000; stroke-width: 3px; stroke-linejoin: round; paint-order: stroke; text-anchor: middle; }
.pins .big { font-size: 13px; }
.ctl { position: absolute; padding: 3px; border-radius: 3px; background: rgba(255,255,255,.45); display: flex; flex-direction: column; gap: 1px; }
.ctl button { width: 29px; height: 29px; border: 0; padding: 0; background: #6c95c2; display: flex; align-items: center; justify-content: center; }
.zoom { left: 7px; top: 7px; }
.home { left: 7px; top: 77px; }
.globe { right: 7px; bottom: 34px; }

.overview { position: relative; height: 30px; background: #eee; border-bottom: 2px solid #333; }
.overview::after { content: ""; position: absolute; left: 0; right: 0; top: 14px; height: 1px; background: rgba(80,90,100,.55); }
.overview .seg { position: absolute; top: 0; height: 14px; border-left: 1px solid #56687c; }
.overview .low { top: 14px; height: 14px; border: 0; }
.overview .range { position: absolute; top: 0; height: 28px; background: #8aa4bc; }
.overview .when { position: absolute; transform: translateX(-50%); font: bold 12px/14px "Liberation Sans", Arial, sans-serif; }
.overview .w1 { top: 0; }
.overview .w2 { top: 15px; }
.grip { position: absolute; top: 1px; border: 13px solid transparent; }
.grip.l { border-right: 14px solid #555; border-left: 0; }
.grip.r { border-left: 14px solid #555; border-right: 0; transform: translateX(-100%); }

.timeline { flex: 1; display: flex; flex-direction: column; background: #fff; }
.head { margin: 0; height: 20px; padding: 0 13px; font-size: 14px; line-height: 16px; color: #fff; border: solid #333; border-width: 1px 0; }
.teal { background: #008f8f; border-top: 0; height: 19px; }
.orange { background: #ec7202; color: #000; }
.red { background: #ff3e10; }
.group { position: relative; }
.grid { position: absolute; inset: 0; width: 100%; height: 100%; }
.grid line { stroke: #aaa; }
.grid .half { stroke-dasharray: 2 4; }
.grid text { fill: #ababab; text-anchor: middle; font-size: 12px; }
.grid .hr { font-size: 22px; }
.lane { position: relative; height: 18px; }
.lane::after { content: ""; position: absolute; left: 63px; right: 0; bottom: 0; height: 1px; background: repeating-linear-gradient(90deg, #000 0 1px, transparent 1px 2px); }
.lane .name { position: relative; width: 62px; height: 18px; padding-right: 6px; text-align: right; font-weight: bold; line-height: 17px; background: linear-gradient(#e2e2e2, #c2c2c2); border: solid #666; border-width: 0 1px 1px 0; z-index: 1; }
.lane .name.on { color: #fff; background: linear-gradient(#8ec04f, #5f9a35); }
.loose { flex: 1; min-height: 30px; }
.loose .lane::after { left: 0; opacity: .65; }
.ev { position: absolute; top: 0; height: 17px; display: flex; border: 1px solid #666; border-radius: 3px; white-space: nowrap; font-size: 10px; line-height: 16px; box-shadow: 0 1px 1px rgba(0,0,0,.3); color: #444; }
.ev .n { font: 13px/15px "Open Sans", sans-serif; display: flex; align-items: center; padding: 0 3px 0 2px; height: 14px; border-right: 1px solid #666; color: #444; }
.ev .n svg { width: 10px; height: 8px; margin: 4px -1px 0 0; color: #008000; }
.ev .n.late svg { color: #f00; }
.ev .t { padding-left: 4px; }
.ev .wheel { width: 10px; height: 11px; margin: 3px 0 0 2px; flex: none; }
.ev .eur { position: absolute; right: 3px; top: 0; font: 13px/14px "Liberation Serif", serif; color: #f00; }
.ev .eur.cut { font-weight: bold; text-decoration: line-through; }
.ev.alert { border: 2px solid #f00; border-width: 1px 0 2px 1px; }
.ev.alert .n { background: #f00; color: #fff; font-weight: bold; border-color: #f00; padding-right: 4px; }
.splitter { height: 10px; border: 0; padding: 0; background: #000; display: flex; justify-content: center; align-items: center; }
```

FILE: app.js
```
const SPAN = 1902;
const pct = px => (px / SPAN * 100).toFixed(3) + '%';
const at = h => 161.1 + (h - 7) * 237.9;

const feed = [
  ['23:31', 'down', 'Auto 3: Vilma R. jätetty kyydistä.'],
  ['23:17', 'down', 'Auto 3: Mari S. jätetty kyydistä.'],
  ['23:02', 'up', 'Auto 3: Vilma R. otettu kyytiin.'],
  ['22:54', 'up', 'Auto 3: Mari S. otettu kyytiin.'],
  ['22:42', 'down', 'Auto 3: Vilma R. jätetty kyydistä.'],
  ['22:40', 'up', 'Auto 3: Tuire P. otettu kyytiin.'],
  ['22:33', 'up', 'Auto 3: Vilma R. otettu kyytiin.'],
  ['15:36', 'down', 'Auto 4: Valo R. jätetty kyydistä.'],
  ['15:27', 'down', 'Auto 4: Varpu T. jätetty kyydistä.'],
  ['15:21', 'down', 'Auto 4: Paula V. jätetty kyydistä.'],
  ['15:10', 'down', 'Auto 4: Kaarle A. jätetty kyydistä.'],
  ['15:02', 'up', 'Auto 4: Varpu T. otettu kyytiin.']
];
document.getElementById('feed').innerHTML = feed.map(([time, dir, text]) =>
  `<li><span>${time}</span><svg width="14" height="14"><use href="#i-${dir}"/></svg><span>${text}</span>` +
  `<button class="target" type="button" aria-label="Näytä kartalla"><svg width="14" height="14"><use href="#i-target"/></svg></button></li>`).join('');

const segs = [
  [570, 589, '#65819a'], [589, 626, '#8d8fb8'], [626, 646, '#8d90ae'], [646, 665, '#65819a'],
  [665, 702, '#8a8cb8'], [702, 722, '#80a3c4'], [722, 760, '#8d90ae'], [760, 989, '#8aa4bc'],
  [989, 1008, '#8b9dab'], [1008, 1045, '#8790a4'], [1045, 1065, '#8aa4bc'], [1065, 1102, '#8b8db9'],
  [1102, 1122, '#eee'], [1122, 1141, '#fff5b0'], [1141, 1179, '#d3bbd5'], [1179, 1217, '#f4c8d4'],
  [1217, 1254, '#ecc0ec'], [1254, 1258, '#eee']
];
document.getElementById('overview').innerHTML =
  `<div class="range" style="left:${pct(493)};width:${pct(609)}"></div>` +
  segs.map(([a, b, c]) => `<div class="seg" style="left:${pct(a)};width:${pct(b - a)};background:${c}"></div>`).join('') +
  `<div class="seg low" style="left:${pct(1065)};width:${pct(37)};background:#907985"></div>` +
  `<i class="grip l" style="left:${pct(494)}"></i><i class="grip r" style="left:${pct(1101)}"></i>` +
  `<span class="when w1" style="left:${pct(797)}">6:29</span><span class="when w2" style="left:${pct(797)}">14:29</span>`;

const P = '#ffccff', V = '#efc2f0', G = '#ccffd6', R = 'rgba(200,80,80,.33)';
const groups = {
  autot: [
    ['Auto 1', [7.136, 8.25, P, '5', 'ok', 'Kevätniitynkuja-Messukylän koulu'], [14, 14.6, V, '2', 'ok', 'Messukylän koulu-Toime']],
    ['Auto 2', [7.967, 8.25, V, '2', 'ok', 'Toime-Messu'], [8.467, 9.217, V, '3', 'ok', 'undefined 2-Messukylän koulu'], [14, 14.6, V, '6', 'ok', 'Messukylän koulu-undefined']],
    ['Auto 3', [7.5, 8.25, R, '4', 'ok', 'Murronkuja-Messukylän koulu'], [7.817, 8.483, R, '1', 'ok', 'Hytinmäenkatu-Messukylän kou']],
    ['Auto 4', [7.5, 8.25, P, '4', 'ok', 'Vispiläkatu-Messukylän koulu'], [14, 14.6, P, '5', 'ok', 'Messukylän koulu-Vispiläkatu']],
    ['Auto 5', [8.5, 9, '#ccc', '4', '', 'Ouluntie-Juhani Aho']],
    ['Auto 6', [8.75, 10, '#ccc', '5', 'ok', 'Kiirlantie-Ristikallion koulu'], [13, 14.6, '#ffffc8', '3', '', 'Jäälin koulu-Ylikiimingintie']],
    ['Auto 7'],
    ['Auto 8', [7.183, 8, G, '1', 'ok', 'Pampinkuja-Hovirinnan koulu', '30€']]
  ],
  bussit: [
    ['Bussi 1', [7.333, 8, G, '3', 'late', 'Ankkurikatu 4-Hovirinnan kou'], [8.767, 9, G, '1', 'wheel', 'Pa', '50€']],
    ['Bussi 2']
  ],
  jakamaton: [['', [14, 14.6, V, '3', 'alert', 'Messukylän-Lamminrahka']]]
};

function eventHtml([from, to, color, n, kind, text, price]) {
  const check = kind === 'ok' || kind === 'late' ? '<svg><use href="#i-check"/></svg>' : '';
  const wheel = kind === 'wheel' ? '<svg class="wheel"><use href="#i-wheel"/></svg>' : '';
  const eur = price ? `<span class="eur${kind === 'wheel' ? ' cut' : ''}">${price}</span>` : '';
  return `<div class="ev ${kind === 'alert' ? 'alert' : ''}" style="left:${pct(at(from))};width:${pct(at(to) - at(from))};background:${color}">` +
    `<span class="n ${kind === 'wheel' ? '' : kind}">${n}${check}</span>${wheel}<span class="t">${text}</span>${eur}</div>`;
}

document.querySelectorAll('.group').forEach(el => {
  const rows = el.dataset.labels ? el.dataset.labels.split(' ') : [];
  let grid = '';
  for (let h = 6.5; h <= 14; h += .5) {
    const x = pct(at(h));
    const full = h % 1 === 0;
    grid += `<line class="${full ? '' : 'half'}" x1="${x}" x2="${x}" y1="${full ? 0 : 4}" y2="100%"/>`;
    rows.forEach(y => { grid += `<text class="${full ? 'hr' : ''}" x="${x}" y="${y}">${full ? h : Math.floor(h) + ':30'}</text>`; });
  }
  el.innerHTML = `<svg class="grid">${grid}</svg>` + groups[el.dataset.group].map(([name, ...evs]) =>
    `<div class="lane">${name ? `<div class="name${name === 'Bussi 1' ? ' on' : ''}">${name}</div>` : ''}${evs.map(eventHtml).join('')}</div>`).join('');
});
```
